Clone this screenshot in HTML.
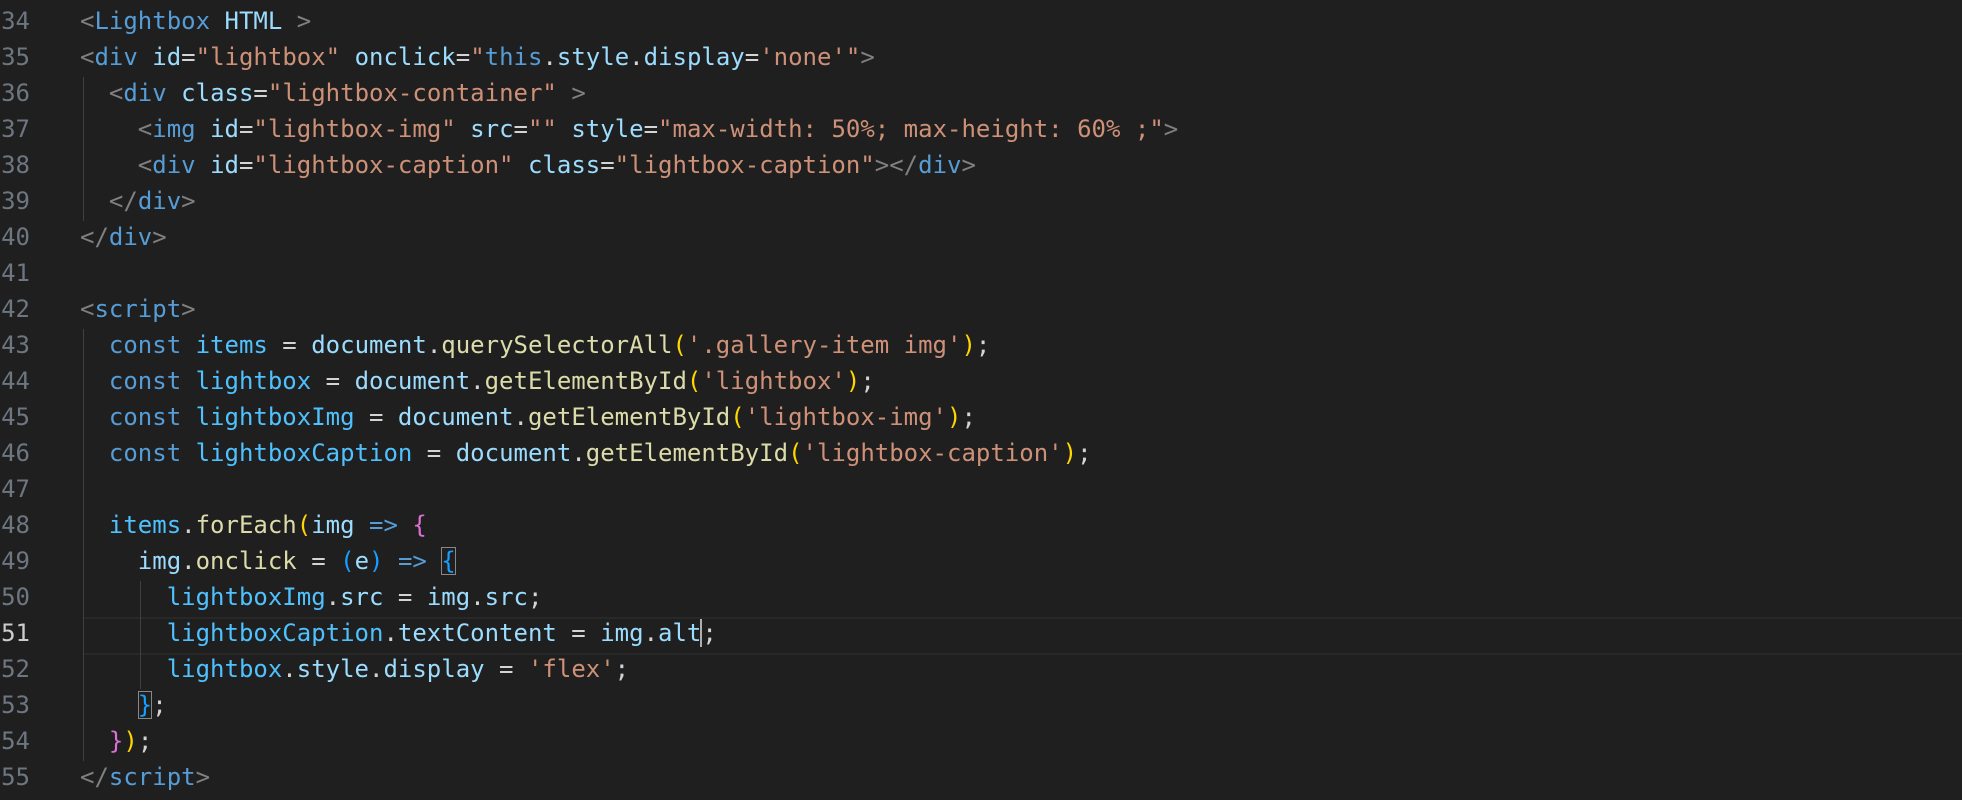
<!DOCTYPE html>
<html><head><meta charset="utf-8"><style>
html,body{margin:0;padding:0;background:#1f1f1f;width:1962px;height:800px;overflow:hidden}
.ed{position:relative;top:1px;font-family:"DejaVu Sans Mono","Liberation Mono",monospace;font-size:24px}
.l{position:absolute;left:0;height:36px;line-height:36px;white-space:pre;width:1962px}
.n{position:absolute;left:0;width:30px;text-align:right;color:#6e7681}
.c{position:absolute;left:80px;color:#d4d4d4}
.g{color:#808080}.t{color:#569cd6}.a{color:#9cdcfe}.s{color:#ce9178}.k{color:#569cd6}.v{color:#4fc1ff}.f{color:#dcdcaa}.y{color:#ffd700}.m{color:#da70d6}.b{color:#179fff}.w{color:#d4d4d4}
.guide{position:absolute;width:1px;background:#404040}
.box{outline:1px solid #888;outline-offset:-1px}
</style></head><body><div class="ed">
<div style="position:absolute;left:83px;top:616px;width:1879px;height:34px;border-top:2px solid #282828;border-bottom:2px solid #282828"></div>
<div class="guide" style="left:83px;top:76px;height:144px"></div>
<div class="guide" style="left:83px;top:328px;height:432px"></div>
<div class="guide" style="left:140px;top:580px;height:108px"></div>
<div class="l" style="top:2px"><span class="n">34</span><span class="c"><span class="g">&lt;</span><span class="t">Lightbox</span> <span class="a">HTML</span> <span class="g">&gt;</span></span></div>
<div class="l" style="top:38px"><span class="n">35</span><span class="c"><span class="g">&lt;</span><span class="t">div</span> <span class="a">id</span>=<span class="s">"lightbox"</span> <span class="a">onclick</span>=<span class="s">"</span><span class="k">this</span>.<span class="a">style</span>.<span class="a">display</span>=<span class="s">'none'"</span><span class="g">&gt;</span></span></div>
<div class="l" style="top:74px"><span class="n">36</span><span class="c">  <span class="g">&lt;</span><span class="t">div</span> <span class="a">class</span>=<span class="s">"lightbox-container"</span> <span class="g">&gt;</span></span></div>
<div class="l" style="top:110px"><span class="n">37</span><span class="c">    <span class="g">&lt;</span><span class="t">img</span> <span class="a">id</span>=<span class="s">"lightbox-img"</span> <span class="a">src</span>=<span class="s">""</span> <span class="a">style</span>=<span class="s">"max-width: 50%; max-height: 60% ;"</span><span class="g">&gt;</span></span></div>
<div class="l" style="top:146px"><span class="n">38</span><span class="c">    <span class="g">&lt;</span><span class="t">div</span> <span class="a">id</span>=<span class="s">"lightbox-caption"</span> <span class="a">class</span>=<span class="s">"lightbox-caption"</span><span class="g">&gt;&lt;/</span><span class="t">div</span><span class="g">&gt;</span></span></div>
<div class="l" style="top:182px"><span class="n">39</span><span class="c">  <span class="g">&lt;/</span><span class="t">div</span><span class="g">&gt;</span></span></div>
<div class="l" style="top:218px"><span class="n">40</span><span class="c"><span class="g">&lt;/</span><span class="t">div</span><span class="g">&gt;</span></span></div>
<div class="l" style="top:254px"><span class="n">41</span></div>
<div class="l" style="top:290px"><span class="n">42</span><span class="c"><span class="g">&lt;</span><span class="t">script</span><span class="g">&gt;</span></span></div>
<div class="l" style="top:326px"><span class="n">43</span><span class="c">  <span class="k">const</span> <span class="v">items</span> = <span class="a">document</span>.<span class="f">querySelectorAll</span><span class="y">(</span><span class="s">'.gallery-item img'</span><span class="y">)</span>;</span></div>
<div class="l" style="top:362px"><span class="n">44</span><span class="c">  <span class="k">const</span> <span class="v">lightbox</span> = <span class="a">document</span>.<span class="f">getElementById</span><span class="y">(</span><span class="s">'lightbox'</span><span class="y">)</span>;</span></div>
<div class="l" style="top:398px"><span class="n">45</span><span class="c">  <span class="k">const</span> <span class="v">lightboxImg</span> = <span class="a">document</span>.<span class="f">getElementById</span><span class="y">(</span><span class="s">'lightbox-img'</span><span class="y">)</span>;</span></div>
<div class="l" style="top:434px"><span class="n">46</span><span class="c">  <span class="k">const</span> <span class="v">lightboxCaption</span> = <span class="a">document</span>.<span class="f">getElementById</span><span class="y">(</span><span class="s">'lightbox-caption'</span><span class="y">)</span>;</span></div>
<div class="l" style="top:470px"><span class="n">47</span></div>
<div class="l" style="top:506px"><span class="n">48</span><span class="c">  <span class="v">items</span>.<span class="f">forEach</span><span class="y">(</span><span class="a">img</span> <span class="k">=&gt;</span> <span class="m">{</span></span></div>
<div class="l" style="top:542px"><span class="n">49</span><span class="c">    <span class="a">img</span>.<span class="f">onclick</span> = <span class="b">(</span><span class="a">e</span><span class="b">)</span> <span class="k">=&gt;</span> <span class="b box">{</span></span></div>
<div class="l" style="top:578px"><span class="n">50</span><span class="c">      <span class="v">lightboxImg</span>.<span class="a">src</span> = <span class="a">img</span>.<span class="a">src</span>;</span></div>
<div class="l" style="top:614px"><span class="n" style="color:#cccccc">51</span><span class="c">      <span class="v">lightboxCaption</span>.<span class="a">textContent</span> = <span class="a">img</span>.<span class="a">alt</span><span style="border-left:2px solid #aeafad;margin-left:-1px"></span>;</span></div>
<div class="l" style="top:650px"><span class="n">52</span><span class="c">      <span class="v">lightbox</span>.<span class="a">style</span>.<span class="a">display</span> = <span class="s">'flex'</span>;</span></div>
<div class="l" style="top:686px"><span class="n">53</span><span class="c">    <span class="b box">}</span>;</span></div>
<div class="l" style="top:722px"><span class="n">54</span><span class="c">  <span class="m">}</span><span class="y">)</span>;</span></div>
<div class="l" style="top:758px"><span class="n">55</span><span class="c"><span class="g">&lt;/</span><span class="t">script</span><span class="g">&gt;</span></span></div>
</div></body></html>
